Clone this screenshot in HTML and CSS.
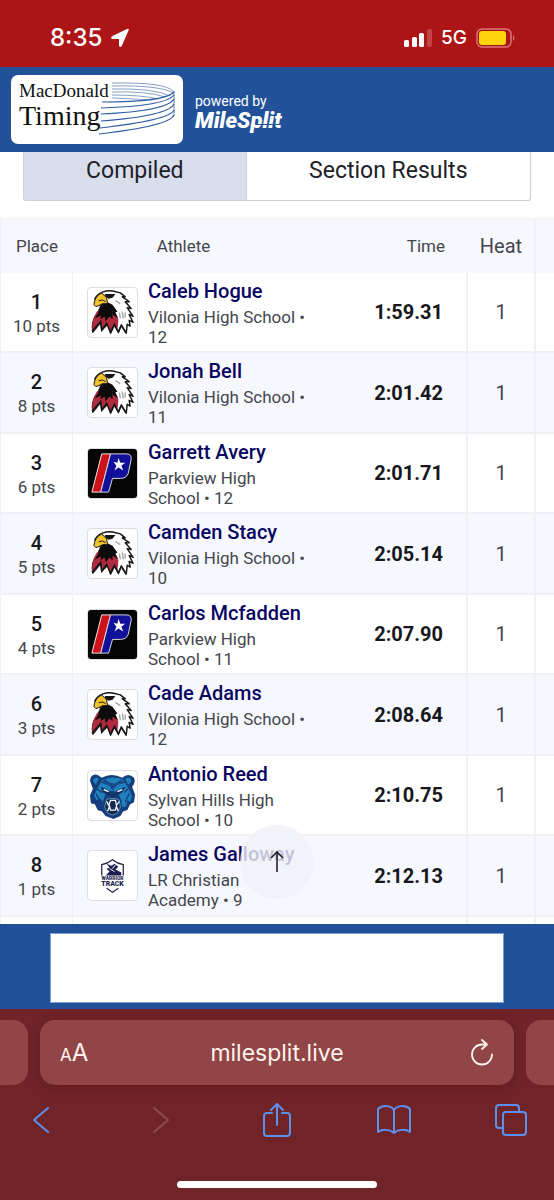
FILE: index.html
```html
<!DOCTYPE html>
<html lang="en">
<head>
    <meta charset="UTF-8">
    <meta name="viewport" content="width=device-width, initial-scale=1.0">
    <title>MacDonald Timing - Results</title>
    <link rel="stylesheet" href="styles.css">
</head>
<body>

    <!-- team logos -->
    <svg class="sprite" aria-hidden="true">
        <symbol id="vilonia" viewBox="0 0 50 50">
            <path d="M7 11C11 4 19 2 25 3L33 5L38 9L35 9L42 14L38 14L44 21L40 20L46 29L42 27L46 35L42 33L43 39L40 37L39 46L34 38L31 45L27 38L23 46L20 37L14 43L13 35L5 45Q3 34 9 27L13 19Z" fill="#fff" stroke="#171717" stroke-width="1.5" stroke-linejoin="round"/>
            <path d="M9 24Q4 32 4 43L6 43L13 34L14 43L19 36L23 45L27 37L30 43L31 32L21 19Z" fill="#b02a40"/>
            <path d="M14 16L10 26L7 31L13 28L13 32L17 29L18 34L22 29L25 32L25 27L31 31L28 25L30 24L25 17L19 14Z" fill="#0c0c0c"/>
            <path d="M6 17Q7 8 14 5L19 10L20 16Q14 15 11 18L8 19Z" fill="#f0c22f" stroke="#171717"/>
            <path d="M11 13Q15 11 18 14" fill="none" stroke="#171717"/>
            <path d="M17 6L28 6L25 10L21 11L18 9Z" fill="#151515"/>
            <path d="M28 13l5 3M32 25l1 6M35 24l1 7M38 25l0 5" stroke="#aaa" stroke-width="1.5"/>
            <path d="M4 44L13 34L14 43L19 36L23 45L27 37L31 45L34 38L39 46" fill="none" stroke="#171717" stroke-width="1.5"/>
        </symbol>
        <symbol id="parkview" viewBox="0 0 50 50">
            <path d="M0 0H50V50H0Z" fill="#050505"/>
            <path d="M14 5H23L13 44H4Z" fill="#cf1119" stroke="#eee"/>
            <path d="M23 5H39Q45 5 44 11L41 25Q39 30 33 30H25L21 44H13Z" fill="#10109a" stroke="#ddd"/>
            <path d="M31 9L33 14L38 14L34 17L36 22L31 19L27 22L29 17L26 13L30 14Z" fill="#fff"/>
        </symbol>
        <symbol id="sylvan" viewBox="0 0 50 50">
            <path d="M2 10Q3 2 10 4L14 7Q24 1 35 7Q41 1 47 7Q49 12 45 16L48 24L47 32L43 34L40 40L36 41L33 46L26 49L18 46L14 41L10 40L7 34L3 33L2 25L5 18Z" fill="#143f7c"/>
            <path d="M5 10Q7 5 11 8L8 14ZM38 8Q44 5 44 11L41 14ZM14 10Q25 4 36 9L41 17L45 26L43 31L40 30L39 36L35 37L34 30L31 23L25 20L18 23L15 32L13 28L9 30L6 25L10 17Z" fill="#1f80bd"/>
            <path d="M13 12L22 15L25 20L30 14L38 12L34 9L27 13L23 12L17 9Z" fill="#174b87"/>
            <path d="M13 16L23 21L22 25L15 22ZM28 21L38 16L35 22L29 25Z" fill="#102d5d"/>
            <path d="M16 19l5 2M35 19l-5 2" stroke="#fff" stroke-width="1.5"/>
            <path d="M21 23H30L28 27H23Z" fill="#103564"/>
            <path d="M19 29L23 28H28L32 30L33 37L30 43L25 45L20 43L17 37Z" fill="#142953" stroke="#73bad8" stroke-width=".7"/>
            <path d="M19 31l2 4 2-5h5l1 5 3-4M20 41l2-5 1 4h5l1-4 2 5" fill="none" stroke="#f3f7f8" stroke-width="1.3"/>
            <path d="M8 23l5 9M42 23l-4 9M9 18l5 4M41 18l-4 4" stroke="#123b72" stroke-width="1.3"/>
        </symbol>
        <symbol id="warrior" viewBox="0 0 50 50">
            <path d="M14 25V14Q20 13 25 9Q30 13 36 14V25M19 38L25 42L31 38" fill="none" stroke="#24264f" stroke-width="1.3"/>
            <path d="M19 13l5 2 3-2 4 3-3 3 6 3v3H18l4-4-3-3 3-1z" fill="#1b1d50"/>
            <path d="M22 18l5 3M28 14l-3 4" stroke="#fff"/>
            <text x="25" y="30" class="warrior-small">WARRIOR</text>
            <text x="25" y="36" class="warrior-big">TRACK</text>
        </symbol>
    </svg>

    <div class="screen">
        <div class="status-bar">
            <span class="clock">8:35</span>
            <svg class="location" viewBox="0 0 20 20"><path d="M17 1Q19.500 0 18.500 2.500L12 17.500Q10 20.500 9 17.500V11H2.500Q-.5 10 2.500 8Z" fill="#fff"/></svg>
            <svg class="signal" viewBox="0 0 28 18">
                <g fill="#fff"><rect x="0" y="11" width="5" height="7" rx="1.500"/><rect x="8" y="8" width="5" height="10" rx="1.500"/><rect x="15" y="4" width="5" height="14" rx="1.500"/></g>
                <rect x="23" y="0" width="5" height="18" rx="1.500" fill="#cf6263" opacity=".6"/>
            </svg>
            <span class="network">5G</span>
            <svg class="battery" viewBox="0 0 40 20">
                <rect x="1" y="1" width="34" height="18" rx="5" fill="none" stroke="#d87678" stroke-width="1.500"/>
                <rect x="3" y="3" width="27" height="14" rx="3" fill="#ffd50a"/>
                <path d="M37 7Q40 10 37 13Z" fill="#d87678"/>
            </svg>
        </div>

        <header class="site-header">
            <div class="timing-logo">
                <div class="timing-name"><span>MacDonald</span><strong>Timing</strong></div>
                <svg class="track-lines" viewBox="0 0 78 56" fill="none" stroke="#315fa4">
                    <path stroke-width=".6" d="M13 2Q68 1 75 11M13 5Q60 4 75 12M13 8Q55 7 71 15M13 11Q49 10 66 16M13 14Q43 14 59 18M13 17Q39 18 48 19"/>
                    <path stroke-width="1.200" d="M3 21Q66 21 75 11M2 27Q67 25 75 14M2 33Q68 30 75 18M2 40Q69 35 75 23M1 47Q71 39 75 29M0 53Q70 45 75 34"/>
                    <path stroke-width=".8" d="M75 10V35"/>
                </svg>
            </div>
            <div class="powered">
                <span>powered by</span>
                <span class="milesplit">MileSplit</span>
            </div>
        </header>

        <main>
            <div class="tabs">
                <button class="tab active">Compiled</button>
                <button class="tab">Section Results</button>
            </div>
            <table class="results">
                <thead>
                    <tr><th class="place">Place</th><th class="athlete">Athlete</th><th class="time">Time</th><th class="heat">Heat</th><th class="more"></th></tr>
                </thead>
                <tbody>
                    <tr>
                        <td class="place"><b>1</b>10 pts</td>
                        <td class="athlete"><div class="runner"><svg class="team"><use href="#vilonia"/></svg><div><a href="#">Caleb Hogue</a><p>Vilonia High School • 12</p></div></div></td>
                        <td class="time">1:59.31</td><td class="heat">1</td><td></td>
                    </tr>
                    <tr>
                        <td class="place"><b>2</b>8 pts</td>
                        <td class="athlete"><div class="runner"><svg class="team"><use href="#vilonia"/></svg><div><a href="#">Jonah Bell</a><p>Vilonia High School • 11</p></div></div></td>
                        <td class="time">2:01.42</td><td class="heat">1</td><td></td>
                    </tr>
                    <tr>
                        <td class="place"><b>3</b>6 pts</td>
                        <td class="athlete"><div class="runner"><svg class="team"><use href="#parkview"/></svg><div><a href="#">Garrett Avery</a><p>Parkview High School • 12</p></div></div></td>
                        <td class="time">2:01.71</td><td class="heat">1</td><td></td>
                    </tr>
                    <tr>
                        <td class="place"><b>4</b>5 pts</td>
                        <td class="athlete"><div class="runner"><svg class="team"><use href="#vilonia"/></svg><div><a href="#">Camden Stacy</a><p>Vilonia High School • 10</p></div></div></td>
                        <td class="time">2:05.14</td><td class="heat">1</td><td></td>
                    </tr>
                    <tr>
                        <td class="place"><b>5</b>4 pts</td>
                        <td class="athlete"><div class="runner"><svg class="team"><use href="#parkview"/></svg><div><a href="#">Carlos Mcfadden</a><p>Parkview High School • 11</p></div></div></td>
                        <td class="time">2:07.90</td><td class="heat">1</td><td></td>
                    </tr>
                    <tr>
                        <td class="place"><b>6</b>3 pts</td>
                        <td class="athlete"><div class="runner"><svg class="team"><use href="#vilonia"/></svg><div><a href="#">Cade Adams</a><p>Vilonia High School • 12</p></div></div></td>
                        <td class="time">2:08.64</td><td class="heat">1</td><td></td>
                    </tr>
                    <tr>
                        <td class="place"><b>7</b>2 pts</td>
                        <td class="athlete"><div class="runner"><svg class="team"><use href="#sylvan"/></svg><div><a href="#">Antonio Reed</a><p>Sylvan Hills High School • 10</p></div></div></td>
                        <td class="time">2:10.75</td><td class="heat">1</td><td></td>
                    </tr>
                    <tr>
                        <td class="place"><b>8</b>1 pts</td>
                        <td class="athlete"><div class="runner"><svg class="team"><use href="#warrior"/></svg><div><a href="#">James Galloway</a><p>LR Christian Academy • 9</p></div></div></td>
                        <td class="time">2:12.13</td><td class="heat">1</td><td></td>
                    </tr>
                    <tr><td class="place"></td><td></td><td class="time"></td><td class="heat"></td><td></td></tr>
                </tbody>
            </table>
            <button class="to-top" aria-label="Back to top">
                <svg viewBox="0 0 14 22" fill="none" stroke="#252529" stroke-width="1.600"><path d="M7 22V2M1 8L7 2L13 8"/></svg>
            </button>
        </main>

        <div class="ad-bar"><div class="ad"></div></div>

        <footer class="browser">
            <div class="address-row">
                <div class="side-tab"></div>
                <div class="address">
                    <button class="text-size" aria-label="Text size"><small>A</small>A</button>
                    <span class="url">milesplit.live</span>
                    <button class="reload" aria-label="Reload">
                        <svg viewBox="0 0 24 28" fill="none" stroke="#fff4ed" stroke-width="1.800" stroke-linecap="round" stroke-linejoin="round"><path d="M16 5.500H12A10 10 0 1 0 22 15.500M12 1L17 5.500L12 10"/></svg>
                    </button>
                </div>
                <div class="side-tab"></div>
            </div>
            <nav class="toolbar">
                <button aria-label="Back"><svg viewBox="0 0 34 34"><path d="M22 5L8 17L22 29"/></svg></button>
                <button aria-label="Forward" disabled><svg viewBox="0 0 34 34"><path d="M11 5L25 17L11 29"/></svg></button>
                <button aria-label="Share"><svg viewBox="0 0 34 34"><path d="M12 10H7Q4 10 4 13V30Q4 33 7 33H27Q30 33 30 30V13Q30 10 27 10H22M17 22V1M11 7L17 1L23 7"/></svg></button>
                <button aria-label="Bookmarks"><svg viewBox="0 0 34 34"><path d="M17 7C14 2 5 2 1 6V29C5 26 13 26 17 30C21 26 29 26 33 29V6C29 2 20 2 17 7V30"/></svg></button>
                <button aria-label="Tabs"><svg viewBox="0 0 34 34"><path d="M9 25H5Q2 25 2 22V5Q2 2 5 2H22Q25 2 25 5V9"/><rect x="9" y="9" width="23" height="23" rx="3"/></svg></button>
            </nav>
            <div class="home-bar"></div>
        </footer>
    </div>

</body>
</html>
```
FILE: styles.css
```css
* {
    box-sizing: border-box;
}

body {
    margin: 0;
    font-family: Roboto, sans-serif;
    color: #202128;
    background: #fff;
}

button {
    border: 0;
    padding: 0;
    background: none;
    color: inherit;
    font-family: inherit;
}

.sprite {
    display: none;
}

.screen {
    display: flex;
    flex-direction: column;
    height: 100vh;
}

/* phone status bar */
.status-bar {
    display: flex;
    align-items: center;
    flex: 0 0 67px;
    padding: 8px 38px 0 50px;
    background: #ad1416;
    color: #fff;
    font-family: Inter, sans-serif;
}

.clock {
    font-size: 24px;
    font-weight: 500;
}

.location {
    width: 20px;
    height: 20px;
    margin-left: 8px;
}

.signal {
    width: 28px;
    height: 18px;
    margin-left: auto;
}

.network {
    margin: 0 9px;
    font-size: 19px;
    font-weight: 500;
}

.battery {
    width: 40px;
    height: 20px;
}

/* site header */
.site-header {
    display: flex;
    align-items: center;
    gap: 12px;
    flex: 0 0 85px;
    padding: 0 11px;
    background: #215299;
}

.timing-logo {
    display: flex;
    position: relative;
    width: 172px;
    height: 69px;
    padding: 5px 8px;
    border-radius: 7px;
    background: #fff;
    color: #111;
}

.timing-name {
    font-family: "Liberation Serif", serif;
    font-size: 19px;
    line-height: 22px;
}

.timing-name span,
.timing-name strong {
    display: block;
}

.timing-name strong {
    font-size: 28px;
    font-weight: 400;
    line-height: 28px;
}

.track-lines {
    position: absolute;
    top: 6px;
    right: 6px;
    width: 78px;
    height: 56px;
}

.powered {
    display: flex;
    flex-direction: column;
    padding-top: 4px;
    color: #fff;
    font-size: 14px;
    line-height: 18px;
}

.milesplit {
    position: relative;
    font-size: 22px;
    font-style: italic;
    font-weight: 900;
    line-height: 22px;
}

/* slit through the last letters of the wordmark */
.milesplit::after {
    content: "";
    position: absolute;
    right: 0;
    bottom: 7px;
    width: 26px;
    height: 1px;
    background: #215299;
}

/* results */
main {
    position: relative;
    flex: 1;
    min-height: 0;
    overflow: hidden;
}

.tabs {
    display: flex;
    margin: 0 23px 17px;
    border: 1px solid #cdcfd8;
    border-top: 0;
    border-radius: 0 0 3px 3px;
}

.tab {
    flex: 1;
    padding-bottom: 10px;
    font-size: 23px;
    line-height: 38px;
}

.tab.active {
    flex: 0 0 44%;
    border-right: 1px solid #cdcfd8;
    background: #d9deed;
}

.results {
    width: 100%;
    table-layout: fixed;
    border-collapse: separate;
    border-spacing: 0;
    border-left: 1px solid #f0f1f5;
    color: #44464d;
}

.results th {
    height: 55px;
    padding: 0;
    border-top: 1px solid #f0f1f5;
    background: #f7f8fd;
    font-size: 17px;
    font-weight: 400;
}

.results th.place {
    width: 72px;
}

.results th.athlete {
    width: 252px;
    padding-right: 31px;
}

.results th.time,
.results td.time {
    padding-right: 23px;
    text-align: right;
}

.results th.heat {
    width: 68px;
    border-right: 2px solid #f0f1f5;
    font-size: 20px;
}

.results th.more {
    width: 18px;
}

.results td {
    height: 80px;
    padding: 0;
    border-bottom: 2px solid #f0f1f5;
}

.results tr:nth-child(even) td {
    height: 81px;
    background: #f7f8fd;
}

.results td.place {
    padding-top: 3px;
    border-right: 1px solid #f0f1f5;
    text-align: center;
    font-size: 17px;
    line-height: 24px;
}

td.place b {
    display: block;
    color: #17181d;
    font-size: 20px;
    font-weight: 500;
}

.runner {
    display: flex;
    align-items: center;
    gap: 10px;
    padding-left: 14px;
}

.runner div {
    width: 162px;
}

.team {
    flex: none;
    width: 51px;
    height: 51px;
    border: 1px solid #dcdde1;
    border-radius: 4px;
    background: #fff;
}

.runner a {
    display: block;
    margin-bottom: 3px;
    color: #080563;
    font-size: 20px;
    font-weight: 500;
    line-height: 26px;
    text-decoration: none;
    white-space: nowrap;
}

.runner p {
    margin: 0;
    font-size: 17px;
    line-height: 20px;
}

td.time {
    border-right: 2px solid #f0f1f5;
    color: #17181d;
    font-size: 20px;
    font-weight: 700;
}

td.heat {
    border-right: 2px solid #f0f1f5;
    font-size: 20px;
    text-align: center;
}

.warrior-small,
.warrior-big {
    fill: #1b1d50;
    font-family: Roboto, sans-serif;
    font-size: 5px;
    font-weight: 900;
    text-anchor: middle;
}

.warrior-big {
    font-size: 7px;
}

.to-top {
    position: absolute;
    left: 50%;
    bottom: 25px;
    width: 74px;
    height: 74px;
    margin-left: -37px;
    border-radius: 50%;
    background: rgba(240, 241, 248, 0.8);
}

.to-top svg {
    width: 14px;
    height: 22px;
}

.ad-bar {
    display: flex;
    justify-content: center;
    flex: 0 0 85px;
    padding: 9px 50px 6px;
    background: #215299;
}

.ad {
    flex: 1;
    border: 1px solid #78a0d0;
    background: #fff;
}

/* browser controls */
.browser {
    flex: 0 0 191px;
    padding-top: 11px;
    background: #702427;
    font-family: Inter, sans-serif;
}

.address-row {
    display: flex;
    gap: 12px;
}

.side-tab {
    width: 28px;
    height: 65px;
    border-radius: 0 15px 15px 0;
    background: #914546;
}

.side-tab:last-child {
    border-radius: 15px 0 0 15px;
}

.address {
    display: flex;
    align-items: center;
    justify-content: space-between;
    flex: 1;
    height: 65px;
    padding: 0 20px;
    border-radius: 15px;
    background: #914546;
    box-shadow: 0 2px 12px rgba(70, 10, 15, 0.25);
    color: #fff4ed;
}

.text-size,
.reload {
    width: 28px;
}

.text-size {
    font-size: 24px;
    white-space: nowrap;
}

.text-size small {
    font-size: 17px;
}

.url {
    font-size: 23px;
}

.reload svg {
    display: block;
    width: 24px;
    height: 28px;
    margin-left: auto;
}

.toolbar {
    display: flex;
    justify-content: space-between;
    padding: 18px 26px 0;
}

.toolbar svg {
    display: block;
    width: 34px;
    height: 34px;
    fill: none;
    stroke: #5a91f0;
    stroke-width: 2;
    stroke-linecap: round;
    stroke-linejoin: round;
}

.toolbar button:disabled svg {
    stroke: #8f4a4e;
}

.home-bar {
    width: 36%;
    height: 7px;
    margin: 44px auto 0;
    border-radius: 4px;
    background: #fff;
}
```
